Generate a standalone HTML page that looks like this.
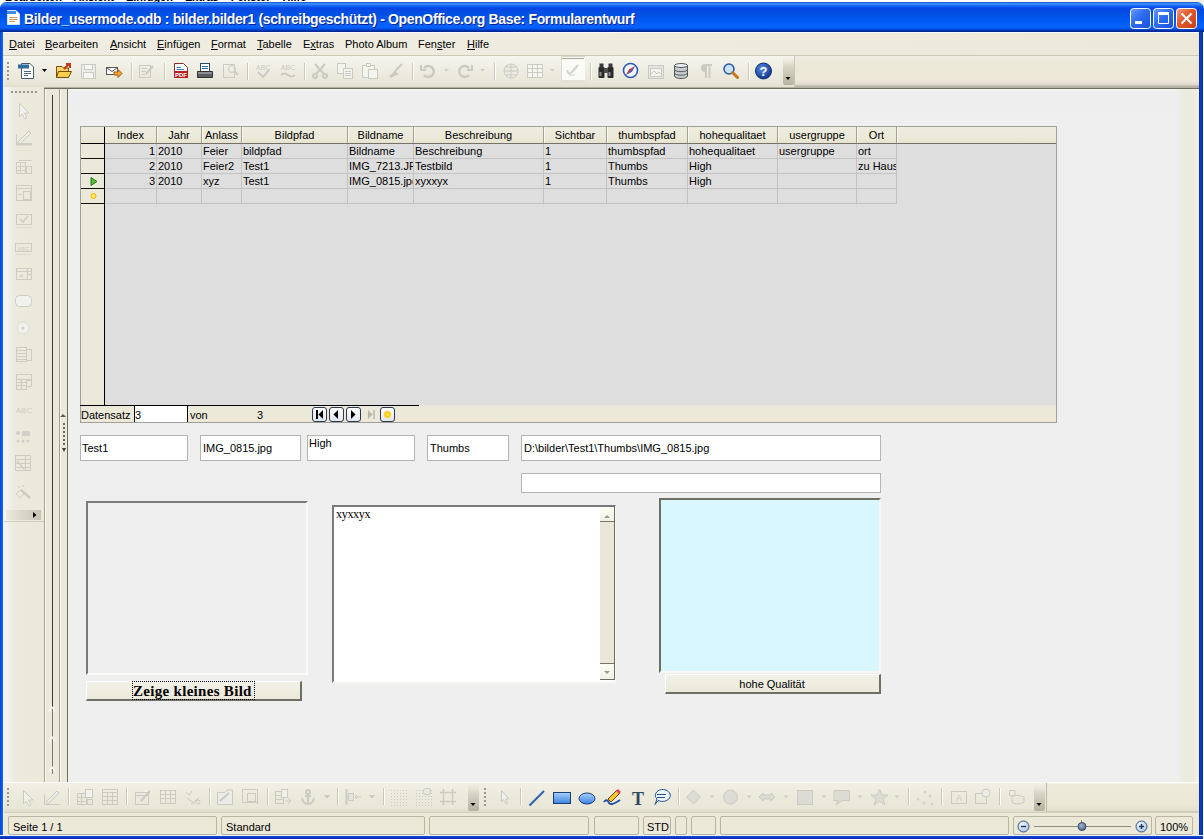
<!DOCTYPE html>
<html><head><meta charset="utf-8">
<style>
*{box-sizing:border-box}
html,body{margin:0;padding:0}
body{width:1204px;height:839px;position:relative;overflow:hidden;background:linear-gradient(90deg,#fff 0,#fff 75%,#f2efe4 100%);font-family:"Liberation Sans",sans-serif;font-size:11px;color:#000}
.a{position:absolute}
.t{position:absolute;white-space:pre;line-height:1}
/* title */
#titlebar{left:0;top:2px;width:1204px;height:30px;border-radius:6px 7px 0 0;background:linear-gradient(#0a2a9a 0,#3a8cff 1px,#3a8cff 2px,#1464f4 4px,#0846e6 6px,#0050e2 12px,#0058f2 18px,#0864ff 25px,#0052e8 27px,#002a98 29px,#002a98 30px)}
#lb{left:0;top:32px;width:4px;height:807px;background:linear-gradient(90deg,#0040c8 0,#0a56e4 1px,#1a62ec 3px,#eef2f8 3px)}
#rb{left:1198px;top:32px;width:6px;height:807px;background:linear-gradient(90deg,#eef6ff 0,#eef6ff 1px,#0a2ca8 1px,#1040c8 3px,#0a2898 5px,#f4f4f4 5px)}
#bb{left:0;top:835px;width:1203px;height:4px;background:linear-gradient(#e4f0fc 0,#e4f0fc 1px,#1848d8 1px,#0a38c0 3px,#08289a)}
.menu{top:32px;left:3px;width:1196px;height:24px;background:linear-gradient(90deg,#efede2,#eeecdf 50%,#ece9da);border-top:1px solid #f8fbff;border-bottom:1px solid #cdc9b5}
.mi{top:39px;font-size:11px}
.u{text-decoration:underline}

#tbband{left:4px;top:56px;width:1195px;height:33px;background:linear-gradient(#efede2,#eae8d8 25%,#efe8d8 75%,#e2ddd0 88%,#b4b0a2 96%);border-bottom:1px solid #6e6c62}
#tb{left:4px;top:56px;width:791px;height:31px;background:linear-gradient(#f6f5ee,#efede2 45%,#e9e7d8 85%,#e2dfcc);border-right:1px solid #c8c6b6}
#ltb{left:4px;top:87px;width:40px;height:695px;background:linear-gradient(90deg,#f4f4f8,#eceadc 30%,#ebe9d8)}
#doc{left:68px;top:89px;width:1131px;height:693px;background:linear-gradient(#f6f6f2,#f6f6f2 1px,#eeeef0 2px,#efefef 30px);}
#btb{left:4px;top:782px;width:1195px;height:31px;background:linear-gradient(#fafaf6 0,#fafaf6 1px,#edeadb 2px,#ebe8d6 70%,#e6e2d0 92%,#c8c4b0 96%,#dcd8c6)}
#btb2{left:4px;top:783px;width:1043px;height:29px;border-right:1px solid #b8b6a6;background:linear-gradient(#f2f0e6,#eceadb 45%,#e9e7d8 85%,#dedbc8)}
#sb{left:4px;top:813px;width:1195px;height:22px;background:#ece9d8}
.sbx{position:absolute;top:816px;height:19px;border:1px solid #b9b5a0;border-radius:2px;background:#ece9d8}
.sbt{top:822px;font-size:11px}
.gh,.gd{font-size:11px}
.fld{position:absolute;background:#fff;border:1px solid #b4b4b4}
</style></head>
<body>
<!-- background window menu remnants -->
<div class="t" style="left:5px;top:-8px;font-size:11px;word-spacing:9px;font-weight:bold">Bearbeiten Ansicht Einfügen Extras Fenster Hilfe</div>

<div id="titlebar" class="a"></div>
<div id="lb" class="a"></div>
<div id="rb" class="a"></div>
<div id="bb" class="a"></div>


<div id="tbband" class="a"></div>
<div id="tb" class="a"></div>

<!-- top toolbar icons -->
<svg class="a" style="left:0;top:55px" width="800" height="32">
<defs>
<linearGradient id="fold" x1="0" y1="0" x2="0" y2="1"><stop offset="0" stop-color="#ffe680"/><stop offset="1" stop-color="#f0a820"/></linearGradient>
<linearGradient id="endg" x1="0" y1="0" x2="0" y2="1"><stop offset="0" stop-color="#ebe9da" stop-opacity="0"/><stop offset="0.35" stop-color="#d8d6c6"/><stop offset="1" stop-color="#b4b2a0"/></linearGradient>
<radialGradient id="helpg" cx="0.4" cy="0.35" r="0.6"><stop offset="0" stop-color="#5a8ee0"/><stop offset="1" stop-color="#163c98"/></radialGradient>
</defs>
<!-- grip -->
<g fill="#9a9888"><rect x="7" y="7" width="2" height="2"/><rect x="7" y="11" width="2" height="2"/><rect x="7" y="15" width="2" height="2"/><rect x="7" y="19" width="2" height="2"/><rect x="7" y="23" width="2" height="2"/></g>
<!-- new doc -->
<g transform="translate(18,8)">
<path d="M3.5 0.5 H12 L15.5 4 V15.5 H3.5 Z" fill="#fff" stroke="#4a5a6a"/>
<rect x="0" y="1.5" width="11" height="4" fill="#2f6d9c"/>
<path d="M6 8.5 H13 M6 10.5 H13 M6 12.5 H10" stroke="#4a6a8a"/>
</g>
<path d="M42 14 L47 14 L44.5 17 Z" fill="#000"/>
<!-- open folder -->
<g transform="translate(56,8)">
<path d="M0.5 3.5 H6 L7.5 5 H12.5 V14.5 H0.5 Z" fill="url(#fold)" stroke="#7a4a08"/>
<path d="M2.5 8.5 H15.5 L12.5 14.5 H0.5 Z" fill="#f8d050" stroke="#7a4a08"/>
<path d="M8 6 L13 1 M10 1 H14 V5" stroke="#c83818" stroke-width="2" fill="none"/>
</g>
<!-- save disabled -->
<g transform="translate(81,9)" stroke="#cbcbc3">
<rect x="0.5" y="0.5" width="14" height="14" fill="#ecece6"/><rect x="3.5" y="0.5" width="8" height="5" fill="#f6f6f2"/><rect x="2.5" y="8.5" width="10" height="6" fill="#f6f6f2"/>
</g>
<!-- email -->
<g transform="translate(106,11)">
<rect x="0.5" y="1.5" width="11" height="7" fill="#fff" stroke="#58585a"/>
<path d="M0.5 1.5 L6 5.5 L11.5 1.5" stroke="#58585a" fill="none"/>
<path d="M8 6 H12 V3.5 L16 7.5 L12 11.5 V9 H8 Z" fill="#f4a830" stroke="#a05810"/>
</g>
<g fill="#c9c7b8"><rect x="131" y="8" width="1" height="17"/><rect x="164" y="8" width="1" height="17"/><rect x="247" y="8" width="1" height="17"/><rect x="304" y="8" width="1" height="17"/><rect x="412" y="8" width="1" height="17"/><rect x="494" y="8" width="1" height="17"/><rect x="590" y="8" width="1" height="17"/><rect x="748" y="8" width="1" height="17"/></g>
<g fill="#fff"><rect x="132" y="8" width="1" height="17"/><rect x="165" y="8" width="1" height="17"/><rect x="248" y="8" width="1" height="17"/><rect x="305" y="8" width="1" height="17"/><rect x="413" y="8" width="1" height="17"/><rect x="495" y="8" width="1" height="17"/><rect x="591" y="8" width="1" height="17"/><rect x="749" y="8" width="1" height="17"/></g>
<!-- edit disabled -->
<g transform="translate(139,8)" fill="none" stroke="#cbcbc3">
<rect x="0.5" y="2.5" width="11" height="12"/><path d="M2.5 5.5 H8 M2.5 8.5 H7 M2.5 11.5 H6"/><path d="M7 11 L14 3" stroke-width="2" stroke="#cbcbc3"/>
</g>
<!-- pdf -->
<g transform="translate(174,8)">
<path d="M0.5 0.5 H9.5 L13.5 4.5 V14.5 H0.5 Z" fill="#fff" stroke="#8a3030"/>
<path d="M2.5 4.5 H7 M2.5 6.5 H10" stroke="#3a80c0"/>
<rect x="0" y="8" width="14" height="7" fill="#b82020"/>
<text x="7" y="14" font-family="Liberation Sans" font-size="6" font-weight="bold" fill="#fff" text-anchor="middle">PDF</text>
</g>
<!-- print -->
<g transform="translate(197,8)">
<rect x="3.5" y="0.5" width="9" height="8" fill="#fff" stroke="#304860"/>
<path d="M5 3.5 H11 M5 5.5 H11" stroke="#2a70c0"/>
<path d="M0.5 8.5 H15.5 V14.5 H0.5 Z" fill="#5a5e62" stroke="#303438"/>
<rect x="1" y="9" width="14" height="2" fill="#8a8e92"/>
</g>
<!-- preview disabled -->
<g transform="translate(223,8)" fill="none" stroke="#cbcbc3">
<rect x="0.5" y="1.5" width="11" height="13"/><circle cx="9" cy="6" r="3.5"/><path d="M11 8 L15 12" stroke-width="2"/>
</g>
<!-- abc check -->
<g transform="translate(255,8)" fill="none" stroke="#cbcbc3">
<text x="8" y="7" font-family="Liberation Sans" font-size="7" fill="#cbcbc3" stroke="none" text-anchor="middle">ABC</text>
<path d="M3 9 L8 14 L14 7" stroke-width="2"/>
</g>
<g transform="translate(280,8)" fill="none" stroke="#cbcbc3">
<text x="8" y="7" font-family="Liberation Sans" font-size="7" fill="#cbcbc3" stroke="none" text-anchor="middle">ABC</text>
<path d="M1 12 Q4 9 8 12 T15 12" stroke-width="2"/>
</g>
<!-- cut -->
<g transform="translate(312,8)" fill="none" stroke="#cbcbc3" stroke-width="2">
<path d="M3 1 L12 11 M13 1 L4 11"/><circle cx="3" cy="13" r="2"/><circle cx="13" cy="13" r="2"/>
</g>
<!-- copy -->
<g transform="translate(337,8)" fill="#f4f4ee" stroke="#cbcbc3">
<rect x="0.5" y="0.5" width="8" height="10"/><rect x="6.5" y="5.5" width="9" height="10"/>
<path d="M8 8.5 H14 M8 10.5 H14 M8 12.5 H14" fill="none"/>
</g>
<!-- paste -->
<g transform="translate(362,8)" fill="#f4f4ee" stroke="#cbcbc3">
<rect x="0.5" y="2.5" width="12" height="12"/><rect x="4.5" y="0.5" width="4" height="3"/><rect x="6.5" y="6.5" width="9" height="9"/>
</g>
<!-- brush -->
<g transform="translate(388,8)" fill="none" stroke="#cbcbc3" stroke-width="2">
<path d="M14 1 L7 8 M2 14 L7 9 L9 11 Z" />
</g>
<!-- undo -->
<g transform="translate(420,8)" fill="none" stroke="#cbcbc3" stroke-width="2.5">
<path d="M4 5 A5.5 5.5 0 1 1 4 12"/><path d="M1 2 V7 H6" stroke-width="2"/>
</g>
<path d="M444 14 L449 14 L446.5 16.5 Z" fill="#cbcbc3"/>
<g transform="translate(457,8)" fill="none" stroke="#cbcbc3" stroke-width="2.5">
<path d="M12 5 A5.5 5.5 0 1 0 12 12"/><path d="M15 2 V7 H10" stroke-width="2"/>
</g>
<path d="M480 14 L485 14 L482.5 16.5 Z" fill="#cbcbc3"/>
<!-- globe -->
<g transform="translate(503,8)" fill="none" stroke="#cbcbc3">
<circle cx="8" cy="8" r="7" fill="#ececE4"/><path d="M1 8 H15 M8 1 V15 M3 4 H13 M3 12 H13"/>
</g>
<!-- table -->
<g transform="translate(527,8)" fill="#f6f6f0" stroke="#cbcbc3">
<rect x="0.5" y="1.5" width="15" height="13"/><path d="M0.5 5.5 H15.5 M0.5 9.5 H15.5 M5.5 1.5 V14.5 M10.5 1.5 V14.5" fill="none"/>
</g>
<path d="M550 14 L555 14 L552.5 16.5 Z" fill="#cbcbc3"/>
<!-- design mode highlighted -->
<rect x="561" y="1" width="24" height="24" fill="#fafaf6"/>
<rect x="561" y="1" width="24" height="1" fill="#d8d6ca"/><rect x="561" y="1" width="1" height="24" fill="#dedcd0"/>
<rect x="562" y="3" width="22" height="1" fill="#a8a69a"/>
<rect x="561" y="25" width="24" height="3" fill="#e4e2d4"/>
<g transform="translate(565,7)" fill="none" stroke="#d2d2ca" stroke-width="2">
<path d="M2 8 Q4 14 7 10 L13 3"/><path d="M4 13 H10" stroke-width="1"/>
</g>
<!-- binoculars -->
<g transform="translate(598,8)">
<rect x="0.5" y="4" width="6" height="11" rx="1" fill="#2a2a2a"/><rect x="9.5" y="4" width="6" height="11" rx="1" fill="#2a2a2a"/>
<rect x="1.5" y="0.5" width="4" height="4" fill="#3a3a3a"/><rect x="10.5" y="0.5" width="4" height="4" fill="#3a3a3a"/>
<rect x="6" y="5" width="4" height="5" fill="#505050"/>
<rect x="1.5" y="9" width="2" height="4" fill="#8a8a8a"/><rect x="10.5" y="9" width="2" height="4" fill="#8a8a8a"/>
</g>
<!-- compass -->
<g transform="translate(623,8)">
<circle cx="7.5" cy="7.5" r="7" fill="#f4f8ff" stroke="#2c5cb8" stroke-width="1.6"/>
<path d="M12 3 L6 6.5 L3 12 L9 8.5 Z" fill="#e02828"/>
<path d="M12 3 L9 8.5 L3 12 Z" fill="#3068d0"/>
</g>
<!-- gallery disabled -->
<g transform="translate(648,9)" stroke="#cbcbc3">
<rect x="0.5" y="1.5" width="15" height="13" fill="#e6e6e0"/><rect x="2.5" y="4.5" width="11" height="8" fill="#f2f2ee"/><path d="M2.5 10.5 L6 7 L9 10 L11 8 L13.5 10.5" fill="none"/>
</g>
<!-- database -->
<g transform="translate(674,8)" stroke="#505858">
<path d="M0.5 2.5 V13 A6.5 2.5 0 0 0 13.5 13 V2.5" fill="#c8ccd0"/>
<ellipse cx="7" cy="2.5" rx="6.5" ry="2" fill="#e8ecf0"/>
<path d="M0.5 6.5 A6.5 2.2 0 0 0 13.5 6.5 M0.5 10 A6.5 2.2 0 0 0 13.5 10" fill="none"/>
</g>
<!-- pilcrow disabled -->
<g transform="translate(699,8)" fill="#cbcbc3">
<path d="M6 1 H13 V3 H11.5 V15 H9.5 V3 H8 V15 H6 V9 A4 4 0 0 1 6 1 Z"/>
</g>
<!-- zoom -->
<g transform="translate(723,8)">
<circle cx="6" cy="6" r="5" fill="#c8e4fc" stroke="#2858a8" stroke-width="1.5"/>
<path d="M9.5 9.5 L14.5 14.5" stroke="#c87818" stroke-width="3" stroke-linecap="round"/>
</g>
<!-- help -->
<g transform="translate(755,8)">
<circle cx="8.5" cy="8" r="8" fill="url(#helpg)" stroke="#10307a"/>
<text x="8.5" y="13" font-family="Liberation Sans" font-weight="bold" font-size="13" fill="#fff" text-anchor="middle">?</text>
</g>
<!-- end grip -->
<rect x="783" y="1" width="11" height="29" rx="2" fill="url(#endg)"/>
<path d="M785.5 22 L790.5 22 L788 25 Z" fill="#000"/>
</svg>

<div id="ltb" class="a"></div>

<!-- left toolbar icons -->
<svg class="a" style="left:0;top:84px" width="48" height="440">
<g fill="#9a9888"><rect x="11" y="7" width="2" height="2"/><rect x="15" y="7" width="2" height="2"/><rect x="19" y="7" width="2" height="2"/><rect x="23" y="7" width="2" height="2"/><rect x="27" y="7" width="2" height="2"/><rect x="31" y="7" width="2" height="2"/><rect x="35" y="7" width="2" height="2"/></g>
<g fill="none" stroke="#cdcdc4">
<!-- select -->
<path d="M19.5 19.5 V33 L22 30 L25 35 L27 34 L24.5 29 L29 29 Z" fill="#f2f2ec"/>
<!-- design -->
<g transform="translate(16,45)"><path d="M0.5 5.5 V15.5 H15.5" /><path d="M2 13 L13 2 L15 4 L4 15 Z" fill="#ecece6"/><rect x="0.5" y="14.5" width="15" height="1.5" fill="#cdcdc4"/></g>
<rect x="15" y="66" width="17" height="1" fill="#e2e0d2" stroke="none"/>
<!-- form ctrl 3 -->
<g transform="translate(16,76)"><rect x="0.5" y="2.5" width="9" height="11"/><path d="M0.5 6.5 H9.5 M0.5 10.5 H9.5 M4.5 2.5 V13.5"/><rect x="10.5" y="6.5" width="5" height="7"/><path d="M3 0.5 H15.5"/></g>
<!-- form ctrl 4 -->
<g transform="translate(16,101)"><rect x="0.5" y="0.5" width="15" height="15"/><path d="M0.5 3.5 H15.5"/><rect x="7.5" y="6.5" width="7" height="8"/><path d="M2.5 9.5 H5.5"/></g>
<!-- checkbox -->
<g transform="translate(16,129)"><rect x="0.5" y="1.5" width="15" height="10"/><path d="M4 6 L7 9 L12 3" stroke-width="1.5"/><path d="M0.5 14.5 H15.5" stroke-dasharray="1 1"/></g>
<!-- label -->
<g transform="translate(15,157)"><rect x="0.5" y="2.5" width="16" height="8"/><text x="8.5" y="9.5" font-family="Liberation Sans" font-size="6" fill="#cdcdc4" stroke="none" text-anchor="middle">ABC</text><path d="M0.5 13.5 H16" stroke-dasharray="1 1"/></g>
<!-- numeric -->
<g transform="translate(16,182)"><rect x="0.5" y="2.5" width="15" height="11"/><path d="M0.5 5.5 H15.5 M11.5 2.5 V13.5 M11.5 8.5 H15.5"/><text x="5.5" y="12" font-family="Liberation Sans" font-size="6" fill="#cdcdc4" stroke="none" text-anchor="middle">#</text></g>
<!-- button -->
<rect x="15.5" y="211.5" width="16" height="11" rx="4" fill="#f2f2ec"/>
<!-- radio -->
<circle cx="23" cy="244" r="6" fill="#f2f2ec" stroke="#dcdcd4"/><circle cx="23" cy="244" r="1.5" fill="#cdcdc4" stroke="none"/>
<!-- listbox -->
<g transform="translate(16,263)"><rect x="0.5" y="0.5" width="10" height="14"/><path d="M0.5 3.5 H10.5 M0.5 6.5 H10.5 M0.5 9.5 H10.5 M0.5 12.5 H10.5"/><rect x="10.5" y="2.5" width="5" height="11"/></g>
<!-- combo -->
<g transform="translate(16,290)"><rect x="0.5" y="0.5" width="15" height="5"/><rect x="0.5" y="5.5" width="10" height="10"/><path d="M0.5 8.5 H10.5 M0.5 11.5 H10.5 M5.5 5.5 V15.5"/><rect x="10.5" y="6.5" width="5" height="6"/></g>
<!-- text ABC -->
<text x="24" y="329" font-family="Liberation Sans" font-size="8" fill="#cdcdc4" stroke="none" text-anchor="middle">ABC</text>
<!-- dots -->
<g fill="#d0d0c8" stroke="none"><circle cx="18" cy="349" r="2"/><rect x="22" y="347" width="8" height="5"/><circle cx="18" cy="357" r="1.5"/><circle cx="23" cy="357" r="1.5"/><circle cx="28" cy="357" r="1.5"/></g>
<!-- table ctrl -->
<g transform="translate(15,371)"><rect x="0.5" y="0.5" width="15" height="15"/><path d="M0.5 4.5 H15.5 M0.5 8.5 H15.5 M0.5 12.5 H15.5 M10.5 0.5 V15.5"/><path d="M2 6 L9 14" stroke-width="1.5"/></g>
<!-- wand -->
<g transform="translate(15,400)"><path d="M6 6 L15 14" stroke-width="2.5"/><path d="M1 10 L5 6 L9 10 L5 14 Z"/><path d="M3 2 L5 4 M8 1 L8 3"/></g>
</g>
</svg>
<div class="a" style="left:6px;top:510px;width:35px;height:10px;background:linear-gradient(90deg,#eceadc,#dcdacb 40%,#c6c4b6)"></div>
<div class="a" style="left:4px;top:521px;width:40px;height:1px;background:#cfcdbb"></div>
<svg class="a" style="left:30px;top:510px" width="10" height="10"><path d="M3 2 L6.5 5 L3 8 Z" fill="#000"/></svg>

<!-- vertical splitter columns -->
<div class="a" style="left:44px;top:89px;width:24px;height:693px;background:#ebe9dc"></div>
<div class="a" style="left:44px;top:89px;width:1px;height:693px;background:#a4a392"></div>
<div class="a" style="left:45px;top:89px;width:1px;height:693px;background:#fbfbf2"></div>
<div class="a" style="left:52px;top:95px;width:1px;height:613px;background:#3c3c30"></div>
<div class="a" style="left:52px;top:708px;width:1px;height:66px;background:#7a7a6c"></div>
<svg class="a" style="left:48px;top:704px" width="9" height="72"><path d="M1 8 L4 3 L7 8 M1 38 L4 33 L7 38 M1 68 L4 63 L7 68" fill="none" stroke="#fafaf4" stroke-width="1.2"/></svg>
<div class="a" style="left:59px;top:89px;width:1px;height:693px;background:#a09f8e"></div>
<div class="a" style="left:60px;top:89px;width:1px;height:693px;background:#fafaf0"></div>
<div class="a" style="left:67px;top:89px;width:1px;height:693px;background:#6e6e60"></div>
<div id="doc" class="a"></div>
<!-- grid -->
<div class="a" style="left:80px;top:126px;width:977px;height:297px;background:#dedede;border:1px solid #a0a09a"></div>
<div class="a" style="left:81px;top:127px;width:975px;height:16px;background:linear-gradient(#eeecdf,#ebe9d8 70%,#e6e3cf)"></div>
<div class="a" style="left:105px;top:143px;width:951px;height:1px;background:#74726a"></div>
<div class="a" style="left:81px;top:144px;width:23px;height:261px;background:#ebe9da"></div>
<div class="a" style="left:81px;top:143px;width:24px;height:1px;background:#000"></div>
<div class="a" style="left:104px;top:127px;width:1px;height:278px;background:#000"></div>
<div class="a" style="left:81px;top:158px;width:23px;height:1px;background:#111"></div>
<div class="a" style="left:105px;top:158px;width:792px;height:1px;background:#c3c3c3"></div>
<div class="a" style="left:81px;top:173px;width:23px;height:1px;background:#111"></div>
<div class="a" style="left:105px;top:173px;width:792px;height:1px;background:#c3c3c3"></div>
<div class="a" style="left:81px;top:188px;width:23px;height:1px;background:#111"></div>
<div class="a" style="left:105px;top:188px;width:792px;height:1px;background:#c3c3c3"></div>
<div class="a" style="left:81px;top:203px;width:23px;height:1px;background:#111"></div>
<div class="a" style="left:105px;top:203px;width:792px;height:1px;background:#c3c3c3"></div>
<div class="a" style="left:156px;top:127px;width:1px;height:16px;background:#a3a190"></div>
<div class="a" style="left:157px;top:127px;width:1px;height:16px;background:#fbfaf2"></div>
<div class="a" style="left:156px;top:144px;width:1px;height:60px;background:#c3c3c3"></div>
<div class="a" style="left:201px;top:127px;width:1px;height:16px;background:#a3a190"></div>
<div class="a" style="left:202px;top:127px;width:1px;height:16px;background:#fbfaf2"></div>
<div class="a" style="left:201px;top:144px;width:1px;height:60px;background:#c3c3c3"></div>
<div class="a" style="left:241px;top:127px;width:1px;height:16px;background:#a3a190"></div>
<div class="a" style="left:242px;top:127px;width:1px;height:16px;background:#fbfaf2"></div>
<div class="a" style="left:241px;top:144px;width:1px;height:60px;background:#c3c3c3"></div>
<div class="a" style="left:347px;top:127px;width:1px;height:16px;background:#a3a190"></div>
<div class="a" style="left:348px;top:127px;width:1px;height:16px;background:#fbfaf2"></div>
<div class="a" style="left:347px;top:144px;width:1px;height:60px;background:#c3c3c3"></div>
<div class="a" style="left:413px;top:127px;width:1px;height:16px;background:#a3a190"></div>
<div class="a" style="left:414px;top:127px;width:1px;height:16px;background:#fbfaf2"></div>
<div class="a" style="left:413px;top:144px;width:1px;height:60px;background:#c3c3c3"></div>
<div class="a" style="left:543px;top:127px;width:1px;height:16px;background:#a3a190"></div>
<div class="a" style="left:544px;top:127px;width:1px;height:16px;background:#fbfaf2"></div>
<div class="a" style="left:543px;top:144px;width:1px;height:60px;background:#c3c3c3"></div>
<div class="a" style="left:606px;top:127px;width:1px;height:16px;background:#a3a190"></div>
<div class="a" style="left:607px;top:127px;width:1px;height:16px;background:#fbfaf2"></div>
<div class="a" style="left:606px;top:144px;width:1px;height:60px;background:#c3c3c3"></div>
<div class="a" style="left:687px;top:127px;width:1px;height:16px;background:#a3a190"></div>
<div class="a" style="left:688px;top:127px;width:1px;height:16px;background:#fbfaf2"></div>
<div class="a" style="left:687px;top:144px;width:1px;height:60px;background:#c3c3c3"></div>
<div class="a" style="left:777px;top:127px;width:1px;height:16px;background:#a3a190"></div>
<div class="a" style="left:778px;top:127px;width:1px;height:16px;background:#fbfaf2"></div>
<div class="a" style="left:777px;top:144px;width:1px;height:60px;background:#c3c3c3"></div>
<div class="a" style="left:856px;top:127px;width:1px;height:16px;background:#a3a190"></div>
<div class="a" style="left:857px;top:127px;width:1px;height:16px;background:#fbfaf2"></div>
<div class="a" style="left:856px;top:144px;width:1px;height:60px;background:#c3c3c3"></div>
<div class="a" style="left:896px;top:127px;width:1px;height:16px;background:#a3a190"></div>
<div class="a" style="left:897px;top:127px;width:1px;height:16px;background:#fbfaf2"></div>
<div class="a" style="left:896px;top:144px;width:1px;height:60px;background:#c3c3c3"></div>
<div class="t gh" style="left:105px;width:51px;top:130px;text-align:center">Index</div>
<div class="t gh" style="left:157px;width:44px;top:130px;text-align:center">Jahr</div>
<div class="t gh" style="left:202px;width:39px;top:130px;text-align:center">Anlass</div>
<div class="t gh" style="left:242px;width:105px;top:130px;text-align:center">Bildpfad</div>
<div class="t gh" style="left:348px;width:65px;top:130px;text-align:center">Bildname</div>
<div class="t gh" style="left:414px;width:129px;top:130px;text-align:center">Beschreibung</div>
<div class="t gh" style="left:544px;width:62px;top:130px;text-align:center">Sichtbar</div>
<div class="t gh" style="left:607px;width:80px;top:130px;text-align:center">thumbspfad</div>
<div class="t gh" style="left:688px;width:89px;top:130px;text-align:center">hohequalitaet</div>
<div class="t gh" style="left:778px;width:78px;top:130px;text-align:center">usergruppe</div>
<div class="t gh" style="left:857px;width:39px;top:130px;text-align:center">Ort</div>
<div class="t gd" style="left:105px;width:50px;top:146px;text-align:right">1</div>
<div class="t gd" style="left:158px;width:43px;top:146px;overflow:hidden">2010</div>
<div class="t gd" style="left:203px;width:38px;top:146px;overflow:hidden">Feier</div>
<div class="t gd" style="left:243px;width:104px;top:146px;overflow:hidden">bildpfad</div>
<div class="t gd" style="left:349px;width:64px;top:146px;overflow:hidden">Bildname</div>
<div class="t gd" style="left:415px;width:128px;top:146px;overflow:hidden">Beschreibung</div>
<div class="t gd" style="left:545px;width:61px;top:146px;overflow:hidden">1</div>
<div class="t gd" style="left:608px;width:79px;top:146px;overflow:hidden">thumbspfad</div>
<div class="t gd" style="left:689px;width:88px;top:146px;overflow:hidden">hohequalitaet</div>
<div class="t gd" style="left:779px;width:77px;top:146px;overflow:hidden">usergruppe</div>
<div class="t gd" style="left:858px;width:38px;top:146px;overflow:hidden">ort</div>
<div class="t gd" style="left:105px;width:50px;top:161px;text-align:right">2</div>
<div class="t gd" style="left:158px;width:43px;top:161px;overflow:hidden">2010</div>
<div class="t gd" style="left:203px;width:38px;top:161px;overflow:hidden">Feier2</div>
<div class="t gd" style="left:243px;width:104px;top:161px;overflow:hidden">Test1</div>
<div class="t gd" style="left:349px;width:64px;top:161px;overflow:hidden">IMG_7213.JPG</div>
<div class="t gd" style="left:415px;width:128px;top:161px;overflow:hidden">Testbild</div>
<div class="t gd" style="left:545px;width:61px;top:161px;overflow:hidden">1</div>
<div class="t gd" style="left:608px;width:79px;top:161px;overflow:hidden">Thumbs</div>
<div class="t gd" style="left:689px;width:88px;top:161px;overflow:hidden">High</div>
<div class="t gd" style="left:858px;width:38px;top:161px;overflow:hidden">zu Hause</div>
<div class="t gd" style="left:105px;width:50px;top:176px;text-align:right">3</div>
<div class="t gd" style="left:158px;width:43px;top:176px;overflow:hidden">2010</div>
<div class="t gd" style="left:203px;width:38px;top:176px;overflow:hidden">xyz</div>
<div class="t gd" style="left:243px;width:104px;top:176px;overflow:hidden">Test1</div>
<div class="t gd" style="left:349px;width:64px;top:176px;overflow:hidden">IMG_0815.jpg</div>
<div class="t gd" style="left:415px;width:128px;top:176px;overflow:hidden">xyxxyx</div>
<div class="t gd" style="left:545px;width:61px;top:176px;overflow:hidden">1</div>
<div class="t gd" style="left:608px;width:79px;top:176px;overflow:hidden">Thumbs</div>
<div class="t gd" style="left:689px;width:88px;top:176px;overflow:hidden">High</div>
<div class="a" style="left:81px;top:405px;width:975px;height:17px;background:linear-gradient(#e8e4dc,#ebead8 3px,#ebe9da 12px,#efe7d6)"></div>
<div class="a" style="left:80px;top:405px;width:339px;height:1px;background:#000"></div>
<div class="a" style="left:134px;top:406px;width:54px;height:16px;background:#fff;border-left:1px solid #000;border-right:1px solid #000"></div>

<svg class="a" style="left:300px;top:404px" width="110" height="20">
<defs><linearGradient id="nbg" x1="0" y1="0" x2="0" y2="1"><stop offset="0" stop-color="#fbfcfe"/><stop offset="1" stop-color="#e2e6ee"/></linearGradient>
<radialGradient id="sun" cx="0.5" cy="0.5" r="0.5"><stop offset="0" stop-color="#fff36a"/><stop offset="0.6" stop-color="#f5c800"/><stop offset="1" stop-color="#f8e8a8"/></radialGradient></defs>
<rect x="12.5" y="3.5" width="14" height="14" rx="2.5" fill="url(#nbg)" stroke="#2c3a4c"/>
<rect x="29.5" y="3.5" width="14" height="14" rx="2.5" fill="url(#nbg)" stroke="#2c3a4c"/>
<rect x="46.5" y="3.5" width="14" height="14" rx="2.5" fill="url(#nbg)" stroke="#2c3a4c"/>
<rect x="80.5" y="3.5" width="14" height="14" rx="2.5" fill="url(#nbg)" stroke="#2c3a4c"/>
<rect x="16" y="6" width="2" height="9" fill="#000"/><path d="M23 6 L18.5 10.5 L23 15 Z" fill="#000"/>
<path d="M38 6 L33.5 10.5 L38 15 Z" fill="#000"/>
<path d="M51 6 L55.5 10.5 L51 15 Z" fill="#000"/>
<path d="M68 6 L72.5 10.5 L68 15 Z" fill="#b8b8b0"/><rect x="73" y="6" width="2" height="9" fill="#c4c4bc"/>
<circle cx="87.5" cy="10.5" r="4" fill="url(#sun)"/>
</svg>
<div class="t gd" style="left:81px;top:410px">Datensatz</div>
<div class="t gd" style="left:135px;top:410px">3</div>
<div class="t gd" style="left:190px;top:410px">von</div>
<div class="t gd" style="left:257px;top:410px">3</div>


<svg class="a" style="left:81px;top:174px" width="23" height="30">
<path d="M10 3.5 L16 7.5 L10 11.5 Z" fill="#58c030" stroke="#287818"/>
<circle cx="12.5" cy="22" r="2.5" fill="#ffe860" stroke="#f8b800"/>
</svg>
<svg class="a" style="left:60px;top:412px" width="8" height="44">
<path d="M3 2 L6 5 H0 Z" fill="#606050" transform="translate(0,0)"/>
<g fill="#6a6a5a"><rect x="3" y="11" width="2" height="2"/><rect x="3" y="15" width="2" height="2"/><rect x="3" y="19" width="2" height="2"/><rect x="3" y="23" width="2" height="2"/><rect x="3" y="27" width="2" height="2"/><rect x="3" y="31" width="2" height="2"/></g>
<path d="M2 36 L6 36 L4 40 Z" fill="#404030"/>
</svg>

<!-- text fields -->
<div class="fld" style="left:80px;top:435px;width:108px;height:26px"></div>
<div class="fld" style="left:200px;top:435px;width:101px;height:26px"></div>
<div class="fld" style="left:307px;top:435px;width:108px;height:26px"></div>
<div class="fld" style="left:427px;top:435px;width:82px;height:26px"></div>
<div class="fld" style="left:521px;top:435px;width:360px;height:26px"></div>
<div class="fld" style="left:521px;top:473px;width:360px;height:20px"></div>
<div class="t gd" style="left:82px;top:443px">Test1</div>
<div class="t gd" style="left:203px;top:443px">IMG_0815.jpg</div>
<div class="t gd" style="left:309px;top:438px">High</div>
<div class="t gd" style="left:430px;top:443px">Thumbs</div>
<div class="t gd" style="left:524px;top:443px">D:\bilder\Test1\Thumbs\IMG_0815.jpg</div>
<!-- image control 1 -->
<div class="a" style="left:86px;top:501px;width:222px;height:174px;border-top:2px solid #7a7a7a;border-left:2px solid #7a7a7a;border-right:2px solid #fafafa;border-bottom:2px solid #fafaf6;background:#efefef"></div>
<!-- button 1 -->
<div class="a" style="left:86px;top:681px;width:216px;height:20px;background:linear-gradient(#f2f1e8,#ebe9d9);border-top:1px solid #fff;border-left:1px solid #fff;border-right:2px solid #6f6f66;border-bottom:2px solid #6f6f66;box-shadow:inset 0 0 0 0 #000"></div>
<div class="a" style="left:132px;top:681px;width:123px;height:19px;border:1px dotted #000"></div>
<div class="t" style="left:133px;top:684px;font-family:'Liberation Serif',serif;font-weight:bold;font-size:15px;letter-spacing:0.3px">Zeige kleines Bild</div>
<!-- textarea -->
<div class="a" style="left:332px;top:505px;width:284px;height:178px;border-top:2px solid #7a7a7a;border-left:2px solid #7a7a7a;border-right:2px solid #f8f8f4;border-bottom:2px solid #f8f8f4;background:#fff"></div>
<div class="a" style="left:600px;top:507px;width:14px;height:173px;background:#ece6d8"></div>
<div class="a" style="left:614px;top:505px;width:1px;height:175px;background:#6c6c5c"></div>
<div class="a" style="left:600px;top:507px;width:14px;height:15px;background:linear-gradient(#fdfdf6,#f1f1e4);border-bottom:1px solid #77766a"></div>
<div class="a" style="left:600px;top:663px;width:14px;height:17px;background:linear-gradient(#fdfdf6,#f1f1e4);border-top:1px solid #77766a;border-bottom:1px solid #6c6c5c"></div>
<svg class="a" style="left:600px;top:507px" width="14" height="173"><path d="M4 11 L7 8 L10 11 Z" fill="#9c9a88"/><path d="M4 164 L7 167 L10 164 Z" fill="#9c9a88"/></svg>
<div class="t" style="left:336px;top:508px;font-family:'Liberation Serif',serif;font-size:12px;letter-spacing:-0.3px">xyxxyx</div>
<!-- image control 2 -->
<div class="a" style="left:659px;top:498px;width:222px;height:175px;border-top:2px solid #6e6e62;border-left:2px solid #6e6e62;border-right:2px solid #f6f6f2;border-bottom:2px solid #f6f6f2;background:#d8f7ff"></div>
<!-- button 2 -->
<div class="a" style="left:665px;top:674px;width:216px;height:20px;background:linear-gradient(#f2f1e8,#ebe9d9);border-top:1px solid #fff;border-left:1px solid #fff;border-right:2px solid #6f6f66;border-bottom:2px solid #6f6f66"></div>
<div class="t gd" style="left:665px;width:214px;top:679px;text-align:center">hohe Qualität</div>

<div class="a" style="left:1176px;top:89px;width:22px;height:693px;background:linear-gradient(90deg,rgba(236,234,222,0),#ecebdf 40%,#eeeadd 75%,#f2f0e4)"></div>
<div id="btb" class="a"></div>
<div id="btb2" class="a"></div>

<!-- bottom toolbar icons -->
<svg class="a" style="left:0;top:782px" width="1050" height="31">
<defs>
<linearGradient id="endg2" x1="0" y1="0" x2="0" y2="1"><stop offset="0" stop-color="#ebe9da" stop-opacity="0"/><stop offset="0.35" stop-color="#d8d6c6"/><stop offset="1" stop-color="#b4b2a0"/></linearGradient>
<linearGradient id="blu" x1="0" y1="0" x2="0" y2="1"><stop offset="0" stop-color="#a8d0fc"/><stop offset="1" stop-color="#3c84e0"/></linearGradient>
</defs>
<g fill="#9a9888"><rect x="7" y="6" width="2" height="2"/><rect x="7" y="10" width="2" height="2"/><rect x="7" y="14" width="2" height="2"/><rect x="7" y="18" width="2" height="2"/><rect x="7" y="22" width="2" height="2"/></g>
<g fill="#9a9888"><rect x="484" y="6" width="2" height="2"/><rect x="484" y="10" width="2" height="2"/><rect x="484" y="14" width="2" height="2"/><rect x="484" y="18" width="2" height="2"/><rect x="484" y="22" width="2" height="2"/></g>
<rect x="68" y="6" width="1" height="17" fill="#c9c7b8"/><rect x="69" y="6" width="1" height="17" fill="#fff"/><rect x="126" y="6" width="1" height="17" fill="#c9c7b8"/><rect x="127" y="6" width="1" height="17" fill="#fff"/><rect x="209" y="6" width="1" height="17" fill="#c9c7b8"/><rect x="210" y="6" width="1" height="17" fill="#fff"/><rect x="267" y="6" width="1" height="17" fill="#c9c7b8"/><rect x="268" y="6" width="1" height="17" fill="#fff"/><rect x="337" y="6" width="1" height="17" fill="#c9c7b8"/><rect x="338" y="6" width="1" height="17" fill="#fff"/><rect x="383" y="6" width="1" height="17" fill="#c9c7b8"/><rect x="384" y="6" width="1" height="17" fill="#fff"/><rect x="520" y="6" width="1" height="17" fill="#c9c7b8"/><rect x="521" y="6" width="1" height="17" fill="#fff"/><rect x="678" y="6" width="1" height="17" fill="#c9c7b8"/><rect x="679" y="6" width="1" height="17" fill="#fff"/><rect x="908" y="6" width="1" height="17" fill="#c9c7b8"/><rect x="909" y="6" width="1" height="17" fill="#fff"/><rect x="941" y="6" width="1" height="17" fill="#c9c7b8"/><rect x="942" y="6" width="1" height="17" fill="#fff"/><rect x="999" y="6" width="1" height="17" fill="#c9c7b8"/><rect x="1000" y="6" width="1" height="17" fill="#fff"/>
<g fill="none" stroke="#cbcbc3">
<path d="M23.5 8.5 V22 L26 19 L29 24 L31 23 L28.5 18 L33 18 Z" fill="#f2f2ec"/>
<g transform="translate(44,7)"><path d="M0.5 5.5 V15.5 H15.5"/><path d="M2 13 L13 2 L15 4 L4 15 Z" fill="#ecece6"/></g>
<g transform="translate(77,7)"><rect x="0.5" y="4.5" width="9" height="11"/><path d="M0.5 8.5 H9.5 M0.5 12.5 H9.5 M4.5 4.5 V15.5"/><rect x="8.5" y="0.5" width="7" height="8" fill="#f2f2ec"/><rect x="10.5" y="10.5" width="5" height="5"/></g>
<g transform="translate(102,7)"><rect x="0.5" y="0.5" width="15" height="15"/><path d="M0.5 3.5 H15.5 M5.5 3.5 V15.5 M10.5 3.5 V15.5 M0.5 7.5 H15.5 M0.5 11.5 H15.5"/></g>
<g transform="translate(135,7)"><rect x="0.5" y="3.5" width="13" height="12"/><path d="M0.5 6.5 H13.5"/><path d="M6 12 L15 2" stroke-width="2"/></g>
<g transform="translate(160,7)"><rect x="0.5" y="1.5" width="15" height="13"/><path d="M0.5 5.5 H15.5 M0.5 9.5 H15.5 M5.5 1.5 V14.5 M10.5 1.5 V14.5"/></g>
<g transform="translate(185,7)"><path d="M1 3 L4 6 L7 2 M2 9 L10 15 M6 15 L14 9"/><circle cx="13" cy="13" r="2"/></g>
<g transform="translate(217,7)"><path d="M0.5 3.5 H8 L10 1 H15.5 V15.5 H0.5 Z" fill="#ecece6"/><path d="M3 12 L12 4" stroke-width="2"/></g>
<g transform="translate(242,7)"><rect x="0.5" y="0.5" width="15" height="13"/><rect x="5.5" y="4.5" width="8" height="8"/><path d="M13 12 L16 15"/></g>
<g transform="translate(275,7)"><rect x="0.5" y="2.5" width="8" height="12"/><path d="M0.5 6.5 H8.5 M0.5 10.5 H8.5"/><rect x="6.5" y="0.5" width="6" height="8" fill="#f0f0ea"/><path d="M10 12 H16 M13 9 L16 12 L13 15"/></g>
<g transform="translate(300,7)" stroke-width="2"><circle cx="8" cy="3" r="2"/><path d="M8 5 V15 M2 9 Q3 15 8 15 Q13 15 14 9 M5 7 H11"/></g>
<path d="M324.5 13.5 L329.5 13.5 L327 16 Z" fill="#cbcbc3"/>
<g transform="translate(345,7)"><path d="M1.5 0 V16" stroke-width="2"/><rect x="3.5" y="4.5" width="5" height="7" fill="#e4e4de"/><path d="M10 8 H16 M12 6 L10 8 L12 10"/></g>
<path d="M369.5 13.5 L374.5 13.5 L372 16 Z" fill="#cbcbc3"/>
<g fill="#cbcbc3" stroke="none">
<rect x="391" y="8" width="1" height="1"/><rect x="416" y="8" width="1" height="1"/><rect x="394" y="8" width="1" height="1"/><rect x="419" y="8" width="1" height="1"/><rect x="397" y="8" width="1" height="1"/><rect x="422" y="8" width="1" height="1"/><rect x="400" y="8" width="1" height="1"/><rect x="425" y="8" width="1" height="1"/><rect x="403" y="8" width="1" height="1"/><rect x="428" y="8" width="1" height="1"/><rect x="406" y="8" width="1" height="1"/><rect x="431" y="8" width="1" height="1"/><rect x="391" y="11" width="1" height="1"/><rect x="416" y="11" width="1" height="1"/><rect x="394" y="11" width="1" height="1"/><rect x="419" y="11" width="1" height="1"/><rect x="397" y="11" width="1" height="1"/><rect x="422" y="11" width="1" height="1"/><rect x="400" y="11" width="1" height="1"/><rect x="425" y="11" width="1" height="1"/><rect x="403" y="11" width="1" height="1"/><rect x="428" y="11" width="1" height="1"/><rect x="406" y="11" width="1" height="1"/><rect x="431" y="11" width="1" height="1"/><rect x="391" y="14" width="1" height="1"/><rect x="416" y="14" width="1" height="1"/><rect x="394" y="14" width="1" height="1"/><rect x="419" y="14" width="1" height="1"/><rect x="397" y="14" width="1" height="1"/><rect x="422" y="14" width="1" height="1"/><rect x="400" y="14" width="1" height="1"/><rect x="425" y="14" width="1" height="1"/><rect x="403" y="14" width="1" height="1"/><rect x="428" y="14" width="1" height="1"/><rect x="406" y="14" width="1" height="1"/><rect x="431" y="14" width="1" height="1"/><rect x="391" y="17" width="1" height="1"/><rect x="416" y="17" width="1" height="1"/><rect x="394" y="17" width="1" height="1"/><rect x="419" y="17" width="1" height="1"/><rect x="397" y="17" width="1" height="1"/><rect x="422" y="17" width="1" height="1"/><rect x="400" y="17" width="1" height="1"/><rect x="425" y="17" width="1" height="1"/><rect x="403" y="17" width="1" height="1"/><rect x="428" y="17" width="1" height="1"/><rect x="406" y="17" width="1" height="1"/><rect x="431" y="17" width="1" height="1"/><rect x="391" y="20" width="1" height="1"/><rect x="416" y="20" width="1" height="1"/><rect x="394" y="20" width="1" height="1"/><rect x="419" y="20" width="1" height="1"/><rect x="397" y="20" width="1" height="1"/><rect x="422" y="20" width="1" height="1"/><rect x="400" y="20" width="1" height="1"/><rect x="425" y="20" width="1" height="1"/><rect x="403" y="20" width="1" height="1"/><rect x="428" y="20" width="1" height="1"/><rect x="406" y="20" width="1" height="1"/><rect x="431" y="20" width="1" height="1"/><rect x="391" y="23" width="1" height="1"/><rect x="416" y="23" width="1" height="1"/><rect x="394" y="23" width="1" height="1"/><rect x="419" y="23" width="1" height="1"/><rect x="397" y="23" width="1" height="1"/><rect x="422" y="23" width="1" height="1"/><rect x="400" y="23" width="1" height="1"/><rect x="425" y="23" width="1" height="1"/><rect x="403" y="23" width="1" height="1"/><rect x="428" y="23" width="1" height="1"/><rect x="406" y="23" width="1" height="1"/><rect x="431" y="23" width="1" height="1"/></g>
<rect x="423.5" y="6.5" width="7" height="6" rx="2" fill="#e8e8e2"/>
<path d="M443.5 7 V23 M452.5 7 V23 M440 10.5 H456 M440 19.5 H456" stroke-width="1.5"/>
</g>
<rect x="468" y="1" width="11" height="28" rx="2" fill="url(#endg2)"/>
<path d="M470.5 21 L475.5 21 L473 24 Z" fill="#000"/>
<!-- drawing -->
<path d="M501.5 8.5 V20 L503.5 17.5 L506 22 L507.5 21 L505.5 17 L509 17 Z" fill="#f0f0ea" stroke="#cbcbc3"/>
<path d="M529.5 23.5 L544 9" stroke="#3060a8" stroke-width="2"/>
<rect x="553.5" y="10.5" width="17" height="11" fill="url(#blu)" stroke="#1c3c78"/>
<ellipse cx="587" cy="16.5" rx="8" ry="5.5" fill="url(#blu)" stroke="#1c3c78"/>
<path d="M604 20 Q607 16 609 21 Q611 24 620 18" fill="none" stroke="#2050a0" stroke-width="2"/>
<path d="M608 17 L617 8 L620 11 L611 20 Z" fill="#f8c830" stroke="#704010"/>
<path d="M616 9 L618 7 L621 10 L619 12 Z" fill="#e84060"/>
<text x="638" y="23" font-family="Liberation Serif" font-weight="bold" font-size="18" fill="#304860" text-anchor="middle">T</text>
<path d="M661.5 7.5 A8 6 0 1 1 658 18.5 L655 22.5 L657 17 A8 6 0 0 1 661.5 7.5 Z" fill="#eaf4fc" stroke="#285090"/>
<path d="M657 12.5 H666 M657 15.5 H665" stroke="#285090"/>
<g fill="#dcdcd4" stroke="#cbcbc3">
<path d="M693.5 8 L700.5 15 L693.5 22 L686.5 15 Z"/>
<circle cx="730.5" cy="15" r="7"/>
<path d="M759 15 L763 11 V13 H771 V11 L775 15 L771 19 V17 H763 V19 Z"/>
<rect x="797.5" y="8.5" width="15" height="14"/>
<path d="M834 8.5 H849.5 V18.5 H842 L836 23 L838 18.5 H834 Z"/>
<path d="M879.5 7 L882 13 L888 13 L883 17 L885 23 L879.5 19 L874 23 L876 17 L871 13 L877 13 Z"/>
</g>
<path d="M709.5 13.5 L714.5 13.5 L712 16 Z" fill="#cbcbc3"/><path d="M746.5 13.5 L751.5 13.5 L749 16 Z" fill="#cbcbc3"/><path d="M783.5 13.5 L788.5 13.5 L786 16 Z" fill="#cbcbc3"/><path d="M821.5 13.5 L826.5 13.5 L824 16 Z" fill="#cbcbc3"/><path d="M857.5 13.5 L862.5 13.5 L860 16 Z" fill="#cbcbc3"/><path d="M894.5 13.5 L899.5 13.5 L897 16 Z" fill="#cbcbc3"/>
<g fill="#d4d4cc"><circle cx="925" cy="10" r="1.5"/><circle cx="930" cy="14" r="1.5"/><circle cx="918" cy="17" r="1.5"/><circle cx="924" cy="21" r="1.5"/><circle cx="932" cy="22" r="1.5"/></g>
<g fill="none" stroke="#cbcbc3">
<rect x="951.5" y="9.5" width="15" height="12"/><text x="959" y="19" font-family="Liberation Sans" font-size="9" fill="#cbcbc3" stroke="none" text-anchor="middle">A</text>
<rect x="975.5" y="11.5" width="11" height="10"/><circle cx="986" cy="11" r="4" fill="#ecece6"/>
<path d="M1009.5 8.5 H1015 V14 H1009.5 Z M1012 14 V20 Q1016 24 1024 20 V15 Q1018 12 1012 14"/>
</g>
<rect x="1034" y="1" width="11" height="28" rx="2" fill="url(#endg2)"/>
<path d="M1036.5 21 L1041.5 21 L1039 24 Z" fill="#000"/>
</svg>

<div id="sb" class="a"></div>
<div class="sbx" style="left:8px;width:209px"></div>
<div class="sbx" style="left:221px;width:204px"></div>
<div class="sbx" style="left:429px;width:160px"></div>
<div class="sbx" style="left:594px;width:45px"></div>
<div class="sbx" style="left:643px;width:28px"></div>
<div class="sbx" style="left:675px;width:12px"></div>
<div class="sbx" style="left:691px;width:25px"></div>
<div class="sbx" style="left:720px;width:289px"></div>
<div class="sbx" style="left:1013px;width:139px"></div>
<div class="sbx" style="left:1155px;width:38px"></div>

<svg class="a" style="left:1013px;top:816px" width="140" height="19">
<defs><radialGradient id="zb" cx="0.4" cy="0.35" r="0.7"><stop offset="0" stop-color="#f4f8ff"/><stop offset="1" stop-color="#a8c0e0"/></radialGradient>
<radialGradient id="zt" cx="0.4" cy="0.35" r="0.7"><stop offset="0" stop-color="#a0b4d0"/><stop offset="1" stop-color="#4a6488"/></radialGradient></defs>
<circle cx="10.5" cy="10.5" r="5.5" fill="url(#zb)" stroke="#3a5a88"/>
<path d="M8 10.5 H13" stroke="#1a3a68" stroke-width="1.5"/>
<path d="M21 10.5 H118" stroke="#8c8a78"/>
<rect x="68" y="4" width="1" height="3" fill="#8c8a78"/>
<circle cx="69" cy="10.5" r="4" fill="url(#zt)" stroke="#3a4a68"/>
<circle cx="128.5" cy="10.5" r="5.5" fill="url(#zb)" stroke="#3a5a88"/>
<path d="M126 10.5 H131 M128.5 8 V13" stroke="#1a3a68" stroke-width="1.5"/>
</svg>
<div class="t sbt" style="left:13px">Seite 1 / 1</div>
<div class="t sbt" style="left:226px">Standard</div>
<div class="t sbt" style="left:647px">STD</div>
<div class="t sbt" style="left:1160px">100%</div>


<svg class="a" style="left:0;top:0" width="1204" height="34">
<defs>
<linearGradient id="bbtn" x1="0" y1="0" x2="1" y2="1"><stop offset="0" stop-color="#6a9cf8"/><stop offset="0.45" stop-color="#2e6cf0"/><stop offset="1" stop-color="#1a50d8"/></linearGradient>
<linearGradient id="rbtn" x1="0" y1="0" x2="1" y2="1"><stop offset="0" stop-color="#f0a088"/><stop offset="0.4" stop-color="#e45c30"/><stop offset="1" stop-color="#c83c10"/></linearGradient>
</defs>
<rect x="1130.5" y="8.5" width="20" height="20" rx="3" fill="url(#bbtn)" stroke="#fff"/>
<rect x="1135" y="21" width="7" height="3" fill="#fff"/>
<rect x="1153.5" y="8.5" width="20" height="20" rx="3" fill="url(#bbtn)" stroke="#fff"/>
<path d="M1158.5 13 V23.5 H1168.5 V13" fill="none" stroke="#fff"/><rect x="1158" y="12" width="11" height="3" fill="#fff"/>
<rect x="1176.5" y="8.5" width="20" height="20" rx="3" fill="url(#rbtn)" stroke="#fff"/>
<path d="M1181.5 13.5 L1191.5 23.5 M1191.5 13.5 L1181.5 23.5" stroke="#fff" stroke-width="2"/>
<g transform="translate(7,10)">
<path d="M0.5 0.5 H9 L12.5 4 V14.5 H0.5 Z" fill="#fff" stroke="#d8e4f0"/>
<rect x="0" y="1" width="9" height="3" fill="#3a8ee8"/>
<path d="M2.5 7.5 H10 M2.5 9.5 H10 M2.5 11.5 H8" stroke="#c89858"/>
</g>
</svg>

<!-- title -->
<div class="t" style="left:24px;top:12px;color:#fff;font-weight:bold;font-size:14px;letter-spacing:-0.35px;text-shadow:1px 1px 0 #0a1e8c">Bilder_usermode.odb : bilder.bilder1 (schreibgeschützt) - OpenOffice.org Base: Formularentwurf</div>

<!-- menu -->
<div class="a menu"></div>
<div class="t mi" style="left:9px"><span class="u">D</span>atei</div>
<div class="t mi" style="left:45px"><span class="u">B</span>earbeiten</div>
<div class="t mi" style="left:110px"><span class="u">A</span>nsicht</div>
<div class="t mi" style="left:157px"><span class="u">E</span>infügen</div>
<div class="t mi" style="left:211px"><span class="u">F</span>ormat</div>
<div class="t mi" style="left:257px"><span class="u">T</span>abelle</div>
<div class="t mi" style="left:303px">E<span class="u">x</span>tras</div>
<div class="t mi" style="left:345px">Photo Album</div>
<div class="t mi" style="left:418px">Fen<span class="u">s</span>ter</div>
<div class="t mi" style="left:467px"><span class="u">H</span>ilfe</div>

</body></html>
